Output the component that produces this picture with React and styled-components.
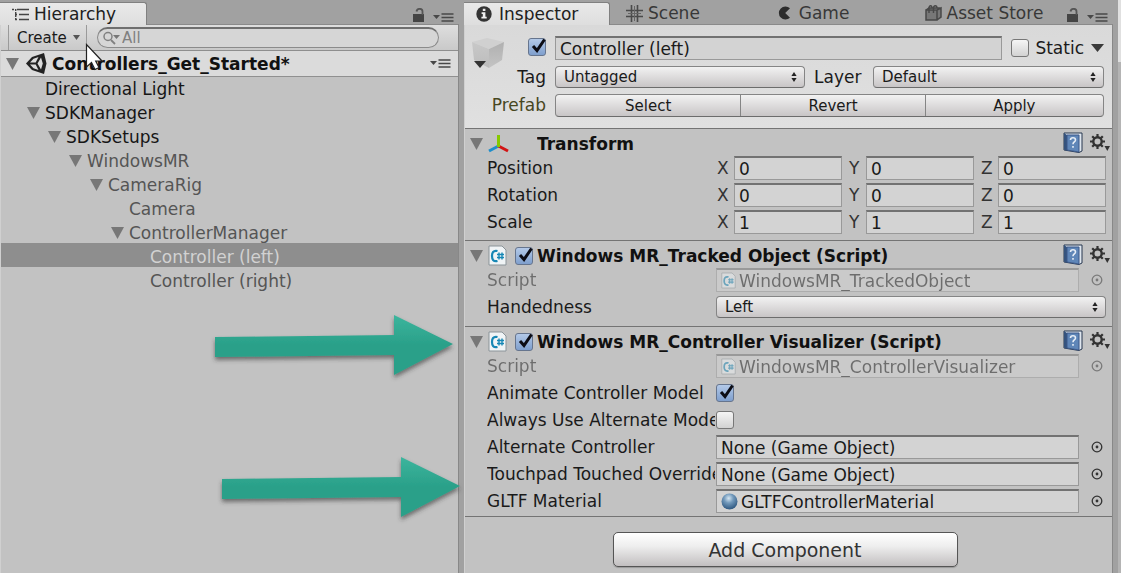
import React from "react";
import styled, { createGlobalStyle, css } from "styled-components";

const GlobalStyle = createGlobalStyle`
  * { box-sizing: border-box; }
  body { margin: 0; background: #a1a1a1; }
  body, input, button, select {
    font-family: "DejaVu Sans", Verdana, sans-serif;
    font-size: 17px;
    color: #1a1a1a;
  }
`;

const Editor = styled.main`
  position: relative;
  display: grid;
  grid-template-columns: minmax(0, 459fr) minmax(0, 649fr) 3px;
  gap: 5px;
  min-height: 100vh;
  background: #a1a1a1;
  overflow: hidden;
`;

const Panel = styled.section`
  position: relative;
  display: flex;
  flex-direction: column;
  min-width: 0;
`;

const TabBar = styled.div`
  display: flex;
  align-items: stretch;
  height: 25px;
  padding-top: 2px;
  border-bottom: 1px solid #8a8a8a;
`;

const Tab = styled.button`
  display: flex;
  align-items: center;
  gap: ${(p) => p.$gap || 5}px;
  width: ${(p) => p.$width}%;
  padding: 0 0 0 ${(p) => p.$inset || 12}px;
  border: 0;
  white-space: nowrap;
  background: transparent;
  color: #383838;
  line-height: 20px;
  ${(p) => p.$active && css`
    height: 23px;
    background: linear-gradient(#e9e9e9, #dedede);
    border-top: 1px solid #808080;
    border-right: 1px solid #808080;
    border-top-right-radius: 3px;
    color: #202020;
  `}
  svg { flex: none; }
`;

const TabActions = styled.div`
  display: flex;
  align-items: flex-end;
  gap: 8px;
  margin-left: auto;
  padding: 0 5px 2px 0;
`;

const Body = styled.div`
  flex: 1;
  background: #c2c2c2;
  border-left: 1px solid #d0d0d0;
  border-right: 1px solid #888;
`;

const Toolbar = styled.div`
  display: flex;
  align-items: center;
  height: 26px;
  padding: 0 19px 0 7px;
  background: linear-gradient(#dedede, #c9c9c9);
  border-bottom: 1px solid #8e8e8e;
`;

const CreateButton = styled.button`
  display: flex;
  align-items: center;
  gap: 6px;
  width: 79px;
  height: 25px;
  padding: 0 0 0 8px;
  border: 0;
  border-left: 1px solid #9a9a9a;
  border-right: 1px solid #9a9a9a;
  background: transparent;
  font-size: 15px;
`;

const Search = styled.label`
  display: flex;
  align-items: center;
  flex: 1;
  min-width: 0;
  height: 21px;
  margin-left: 10px;
  padding-left: 5px;
  border: 1px solid #8b8b8b;
  border-top: 2px solid #6f6f6f;
  border-radius: 11px;
  background: #d6d6d6;
`;

const SearchInput = styled.input`
  flex: 1;
  min-width: 0;
  padding: 0 0 0 1px;
  border: 0;
  outline: 0;
  background: transparent;
  color: #808080;
  font-size: 15px;
  line-height: 18px;
  &::placeholder { color: #808080; opacity: 1; }
`;

const SceneRow = styled.div`
  display: flex;
  align-items: center;
  height: 26px;
  padding: 0 7px 0 5px;
  background: #dbdbdb;
  border-bottom: 1px solid #909090;
  font-weight: 700;
  color: #111;
  svg:last-child { margin-left: auto; }
`;

const SceneIcon = styled.span`
  display: flex;
  width: 33px;
  padding-left: 7px;
  svg:last-child { margin-left: 0; }
`;

const Tree = styled.ul`
  list-style: none;
  margin: -2px 0 0;
  padding: 0;
`;

const TreeRow = styled.li`
  display: flex;
  align-items: center;
  gap: 5px;
  height: 24px;
  padding: 3px 0 0 ${(p) => 5 + p.$depth * 21}px;
  background: ${(p) => (p.$selected ? "#8e8e8e" : "transparent")};
  color: ${(p) => (p.$selected ? "#d2d2d2" : p.$muted ? "#555" : "#161616")};
  white-space: nowrap;
`;

const FoldSpace = styled.span`
  width: 13px;
`;

const ObjectHeader = styled.div`
  display: grid;
  grid-template-columns: 81px minmax(0, 1fr);
  align-content: start;
  column-gap: 9px;
  row-gap: 6px;
  height: 103px;
  padding: 11px 8px 0 0;
  background: linear-gradient(#d9d9d9, #e0e0e0);
`;

const HeaderLead = styled.div`
  display: flex;
  align-items: flex-start;
  justify-content: space-between;
  padding: 2px 0 0 7px;
  height: 24px;
`;

const HeaderLabel = styled.label`
  justify-self: end;
  line-height: 22px;
  color: ${(p) => (p.$prefab ? "#47471f" : "#1a1a1a")};
`;

const HeaderLine = styled.div`
  display: flex;
  align-items: center;
  min-width: 0;
  height: ${(p) => p.$height || 24}px;
`;

const StaticLabel = styled.label`
  display: flex;
  align-items: center;
  gap: 6px;
  margin: 0 7px 0 9px;
`;

const LayerLabel = styled.label`
  width: 68px;
  padding-left: 9px;
`;

const Field = styled.input`
  flex: 1;
  width: 100%;
  min-width: 0;
  height: 24px;
  padding: 0 4px;
  border: 1px solid #999;
  border-top: 2px solid #727272;
  border-radius: 0;
  outline: 0;
  background: #d3d3d3;
`;

const SelectWrap = styled.div`
  position: relative;
  display: flex;
  flex: ${(p) => p.$grow || 1} 1 0;
  min-width: 0;
  svg { position: absolute; right: 8px; top: 6px; pointer-events: none; }
`;

const SelectBox = styled.select`
  appearance: none;
  width: 100%;
  height: 22px;
  padding: 0 20px 0 8px;
  border: 1px solid #858585;
  border-bottom-color: #6c6c6c;
  border-radius: 4px;
  outline: 0;
  background: linear-gradient(#f2f2f2, #c8c5c6);
  font-size: 15px;
`;

const ButtonGroup = styled.div`
  display: grid;
  grid-template-columns: 185fr 185fr 179fr;
  height: 23px;
  border: 1px solid #858585;
  border-bottom-color: #6c6c6c;
  border-radius: 4px;
  background: linear-gradient(#f2f2f2, #c8c5c6);
`;

const GroupButton = styled.button`
  padding: 0;
  border: 0;
  border-left: ${(p) => (p.$first ? 0 : 1)}px solid #858585;
  background: transparent;
  font-size: 15px;
`;

const CheckWrap = styled.span`
  position: relative;
  display: inline-flex;
  flex: none;
  width: 18px;
  height: 18px;
  svg { position: absolute; left: 2px; top: -1px; pointer-events: none; display: none; }
  input:checked + svg { display: block; }
`;

const CheckInput = styled.input`
  appearance: none;
  width: 18px;
  height: 18px;
  margin: 0;
  border: 1px solid #777;
  border-radius: 3px;
  background: linear-gradient(#f5f5f5, #d2d2d2);
  &:checked { background: linear-gradient(#b3c9e8, #7f9fcd); border-color: #66758e; }
`;

const ComponentBox = styled.section`
  padding: 0 6px ${(p) => p.$bottom || 6}px 22px;
  border-top: 1px solid #747474;
`;

const ComponentHead = styled.header`
  display: flex;
  align-items: center;
  height: 27px;
  padding-top: 2px;
  margin: 0 -4px 0 -17px;
`;

const ComponentIcon = styled.span`
  display: flex;
  width: 32px;
  padding-left: 5px;
`;

const Toggle = styled.span`
  display: flex;
  width: 18px;
`;

const ComponentTitle = styled.h2`
  flex: 1;
  min-width: 0;
  margin: 0 0 0 4px;
  overflow: hidden;
  font-size: 17px;
  line-height: 22px;
  white-space: nowrap;
  color: #111;
`;

const HeadTools = styled.span`
  display: flex;
  align-items: center;
  gap: 7px;
  padding-bottom: 2px;
`;

const Rows = styled.div`
  display: grid;
  gap: 3px;
`;

const Row = styled.div`
  display: grid;
  grid-template-columns: 228px minmax(0, 1fr);
  column-gap: 1px;
  align-items: center;
  height: 24px;
  opacity: ${(p) => (p.$disabled ? 0.5 : 1)};
`;

const RowLabel = styled.label`
  overflow: hidden;
  line-height: 24px;
  white-space: nowrap;
`;

const Axes = styled.div`
  display: grid;
  grid-template-columns: repeat(3, minmax(0, 1fr));
  gap: 6px;
`;

const Axis = styled.label`
  display: flex;
  align-items: center;
`;

const AxisName = styled.span`
  width: 18px;
  padding-left: 1px;
  color: #333;
`;

const ObjectSlot = styled.div`
  display: flex;
  align-items: center;
  gap: 12px;
  padding-right: 3px;
`;

const SlotBox = styled.div`
  display: flex;
  align-items: center;
  gap: 3px;
  flex: 1;
  min-width: 0;
  height: 24px;
  padding: 0 4px;
  border: 1px solid #999;
  border-top: 2px solid #727272;
  background: #d3d3d3;
`;

const SlotInput = styled.input`
  flex: 1;
  min-width: 0;
  padding: 0;
  border: 0;
  outline: 0;
  background: transparent;
  line-height: 20px;
`;

const PickButton = styled.button`
  display: flex;
  padding: 0;
  border: 0;
  background: transparent;
`;

const Footer = styled.footer`
  display: flex;
  justify-content: center;
  padding: 15px 13px 5px 6px;
  border-top: 1px solid #747474;
`;

const AddButton = styled.button`
  width: 345px;
  height: 35px;
  padding: 0;
  border: 1px solid #555;
  border-radius: 5px;
  background: linear-gradient(#fff, #eee 40%, #c2bfc0);
  box-shadow: 0 1px 1px #999;
  font-size: 19px;
  color: #333;
`;

const SideStrip = styled.div`
  background: linear-gradient(#e0e0e0 0 62px, #b4b4b4 62px);
`;

const Arrows = styled.svg`
  position: absolute;
  right: -10px;
  top: 300px;
  width: 260px;
  height: 230px;
  z-index: 2;
  pointer-events: none;
`;

const Pointer = styled.svg`
  position: absolute;
  left: 85px;
  top: 43px;
  z-index: 3;
  pointer-events: none;
`;

const Fold = () => (
  <svg width="13" height="12" viewBox="0 0 13 12"><path d="M0 0h13L6.500 12z" fill="#777" /></svg>
);

const Caret = ({ w = 7, h = 5, color = "#555" }) => (
  <svg width={w} height={h} viewBox="0 0 7 5" preserveAspectRatio="none"><path d="M0 0h7L3.500 5z" fill={color} /></svg>
);

const MenuIcon = () => (
  <svg width="21" height="9" viewBox="0 0 21 9">
    <path d="M0 2h7L3.500 6z" fill="#484848" />
    <path d="M8.500 1h12M8.500 4.500h12M8.500 8h12" stroke="#484848" strokeWidth="1.500" />
  </svg>
);

const LockIcon = () => (
  <svg width="12" height="14" viewBox="0 0 12 14">
    <path d="M0 6h11v8H0z" fill="#444" />
    <path d="M3.500 3.500C4 0 9.500 0 9.500 3.500V7" fill="none" stroke="#555" strokeWidth="1.800" />
  </svg>
);

const ListIcon = () => (
  <svg width="17" height="13" viewBox="0 0 17 13">
    <path d="M5 1.500h12M7 6.500h10M7 11.500h10" stroke="#444" strokeWidth="1.600" />
    <path d="M0 1.500h3M3 6.500h2M3 11.500h2M3.700 1v11" stroke="#444" strokeWidth="1.400" strokeDasharray="2 1" />
  </svg>
);

const InfoIcon = () => (
  <svg width="16" height="16" viewBox="0 0 16 16">
    <circle cx="8" cy="8" r="7.700" fill="#333" />
    <path d="M6.800 2.800h2.600v2.200H6.800zM5.600 6.300h3.800v4.400h1.300v1.700H5.400v-1.700h1.400V8H5.600z" fill="#eee" />
  </svg>
);

const GridIcon = () => (
  <svg width="17" height="17" viewBox="0 0 17 17">
    <path d="M0 5.500h17M0 11.500h17M5.500 0v17M11.500 0v17" stroke="#4a4a4a" strokeWidth="1.600" />
    <path d="M2 8.500h13M8.500 1v15" stroke="#666" strokeWidth="1" />
  </svg>
);

const GameIcon = () => (
  <svg width="14" height="14" viewBox="0 0 14 14">
    <path d="M12 2.200A6.600 6.600 0 1 0 12 11.800L7.200 7z" fill="#2d2d2d" />
  </svg>
);

const StoreIcon = () => (
  <svg width="17" height="16" viewBox="0 0 17 16">
    <path d="M1 5h11v10H1zM12 5l4-2v9l-4 3M1 5l3-2h12" fill="#777" stroke="#484848" strokeWidth="1.500" />
    <path d="M4 8V3C4 0 7 0 7 3M8.500 8V3C8.500 0 12 0 12 3" fill="none" stroke="#484848" strokeWidth="1.400" />
  </svg>
);

const SearchIcon = () => (
  <svg width="18" height="14" viewBox="0 0 18 14">
    <circle cx="5" cy="5.500" r="4" fill="none" stroke="#808080" strokeWidth="1.500" />
    <path d="M8 9l4 4" stroke="#808080" strokeWidth="1.800" />
    <path d="M10 4h7l-3.500 4z" fill="#777" />
  </svg>
);

const UnityIcon = () => (
  <svg width="21" height="21" viewBox="0 0 21 21">
    <path d="M0 10.500L6 4l12-4 2.500 10.500L18 21 6 17z" fill="#222" />
    <path d="M4 9.500l3.500-3.700 5-1.800-2.800 5.500zM4 11.600l3.500 3.700 5 1.800-2.800-5.500zM11.500 10.500l3.500-6.100 1.800 6.100-1.800 6.100z" fill="#dbdbdb" />
  </svg>
);

const CubeIcon = () => (
  <svg width="32" height="31" viewBox="0 0 32 31">
    <defs>
      <linearGradient id="cubeL" x1="0" y1="0" x2="0" y2="1"><stop offset="0" stopColor="#c8c8c8" /><stop offset="1" stopColor="#bcbcbc" /></linearGradient>
      <linearGradient id="cubeR" x1="0" y1="0" x2="0" y2="1"><stop offset="0" stopColor="#b0b0b0" /><stop offset="1" stopColor="#c4c4c4" /></linearGradient>
    </defs>
    <path d="M0 4L15 0l17 4-15 7z" fill="#d0d0d0" />
    <path d="M0 4l17 7v19L2 22z" fill="url(#cubeL)" />
    <path d="M32 4l-15 7v19l13-8z" fill="url(#cubeR)" />
    <path d="M2 23h12l-6 7z" fill="#333" />
  </svg>
);

const CheckMark = () => (
  <svg width="17" height="17" viewBox="0 0 17 17">
    <path d="M3 9l4 4.500L14.500 2.500" fill="none" stroke="#0c0c14" strokeWidth="3" />
  </svg>
);

const UpDown = () => (
  <svg width="6" height="10" viewBox="0 0 6 10"><path d="M3 0l2.600 4H.4zM3 10l2.600-4H.4z" fill="#222" /></svg>
);

const AxesIcon = () => (
  <svg width="21" height="18" viewBox="0 0 21 18">
    <path d="M10.500 11L1 16" stroke="#1f8ecb" strokeWidth="3" />
    <path d="M10.500 11l9.500 5" stroke="#d21414" strokeWidth="3" />
    <path d="M10.500 0v12" stroke="#86c900" strokeWidth="3" />
  </svg>
);

const ScriptIcon = ({ size = 20 }) => (
  <svg width={size - 1} height={size + 1} viewBox="0 0 19 21">
    <path d="M1 1h13l4 4v15H1z" fill="#f0f4f6" stroke="#8b9499" />
    <path d="M9.500 6C5 5 4 8 4 11c0 3.500 1.500 6 5.500 5" fill="none" stroke="#1687b5" strokeWidth="2.200" />
    <path d="M11 7.500v7M14 7.500v7M9 9.500h7M9 12.500h7" stroke="#1687b5" strokeWidth="1.400" />
  </svg>
);

const BookIcon = () => (
  <svg width="20" height="21" viewBox="0 0 20 21">
    <path d="M1 1h18v18l-3 1.500L1 18z" fill="#dfe6ee" stroke="#26364f" />
    <path d="M1 1l3 2v16l-3-1.500z" fill="#35537d" />
    <path d="M4 3h12v17L4 18z" fill="#5f86b8" stroke="#3c598a" />
    <path d="M7.500 8C7.500 5 12.500 5 12.500 8c0 2-2.500 2-2.500 4.200M10 14v1.800" fill="none" stroke="#e8eef6" strokeWidth="1.600" />
  </svg>
);

const GearIcon = () => (
  <svg width="20" height="18" viewBox="0 0 20 18">
    <circle cx="7.500" cy="7.500" r="4.200" fill="none" stroke="#333" strokeWidth="2.400" />
    <path d="M7.500 0v3M7.500 12v3M0 7.500h3M12 7.500h3M2.200 2.200l2.200 2.200M10.600 10.600l2.200 2.200M2.200 12.800l2.200-2.200M10.600 4.400l2.200-2.200" stroke="#333" strokeWidth="2.200" />
    <path d="M14.500 12H20l-2.700 5z" fill="#333" />
  </svg>
);

const PickIcon = () => (
  <svg width="12" height="12" viewBox="0 0 12 12">
    <circle cx="6" cy="6" r="4.800" fill="none" stroke="#333" strokeWidth="1.300" />
    <circle cx="6" cy="6" r="1.400" fill="#333" />
  </svg>
);

const MaterialIcon = () => (
  <svg width="17" height="17" viewBox="0 0 17 17">
    <defs>
      <radialGradient id="sphere" cx="45%" cy="30%" r="65%">
        <stop offset="0" stopColor="#d5e6f2" /><stop offset="0.450" stopColor="#7299bb" /><stop offset="1" stopColor="#365f87" />
      </radialGradient>
    </defs>
    <circle cx="8.500" cy="8.500" r="8" fill="url(#sphere)" />
  </svg>
);

const CHECK_LABELS = { active: "Active", enabled: "Enabled" };

function Check({ id, checked, name }) {
  return (
    <CheckWrap>
      <CheckInput type="checkbox" id={id} defaultChecked={checked} aria-label={CHECK_LABELS[name]} />
      <CheckMark />
    </CheckWrap>
  );
}

function Dropdown({ id, value, grow }) {
  return (
    <SelectWrap $grow={grow}>
      <SelectBox id={id} defaultValue={value}><option>{value}</option></SelectBox>
      <UpDown />
    </SelectWrap>
  );
}

function Vector({ label, values }) {
  return (
    <Row>
      <RowLabel as="span">{label}</RowLabel>
      <Axes>
        {["X", "Y", "Z"].map((axis, i) => (
          <Axis key={axis}><AxisName>{axis}</AxisName><Field defaultValue={values[i]} /></Axis>
        ))}
      </Axes>
    </Row>
  );
}

function Slot({ id, label, value, icon, disabled }) {
  return (
    <Row $disabled={disabled}>
      <RowLabel htmlFor={id}>{label}</RowLabel>
      <ObjectSlot>
        <SlotBox>{icon}<SlotInput id={id} readOnly value={value} /></SlotBox>
        <PickButton aria-label={`Pick ${label}`}><PickIcon /></PickButton>
      </ObjectSlot>
    </Row>
  );
}

function Component({ title, icon, toggle, bottom, children }) {
  return (
    <ComponentBox $bottom={bottom}>
      <ComponentHead>
        <Fold />
        <ComponentIcon>{icon}</ComponentIcon>
        <Toggle>{toggle && <Check checked name="enabled" />}</Toggle>
        <ComponentTitle>{title}</ComponentTitle>
        <HeadTools><BookIcon /><GearIcon /></HeadTools>
      </ComponentHead>
      <Rows>{children}</Rows>
    </ComponentBox>
  );
}

const NODES = [
  { name: "Directional Light", depth: 1, leaf: true },
  { name: "SDKManager", depth: 1 },
  { name: "SDKSetups", depth: 2 },
  { name: "WindowsMR", depth: 3, muted: true },
  { name: "CameraRig", depth: 4, muted: true },
  { name: "Camera", depth: 5, leaf: true, muted: true },
  { name: "ControllerManager", depth: 5, muted: true },
  { name: "Controller (left)", depth: 6, leaf: true, selected: true },
  { name: "Controller (right)", depth: 6, leaf: true, muted: true },
];

const ARROW = "M6 37L185 35V15L244 44L185 75V55L6 57z";

function Hierarchy() {
  return (
    <Panel>
      <TabBar>
        <Tab $active $width={32}><ListIcon />Hierarchy</Tab>
        <TabActions><LockIcon /><MenuIcon /></TabActions>
      </TabBar>
      <Body>
        <Toolbar>
          <CreateButton>Create <Caret /></CreateButton>
          <Search><SearchIcon /><SearchInput placeholder="All" aria-label="Search" /></Search>
        </Toolbar>
        <SceneRow><Fold /><SceneIcon><UnityIcon /></SceneIcon>Controllers_Get_Started*<MenuIcon /></SceneRow>
        <Tree>
          {NODES.map((n) => (
            <TreeRow key={n.name} $depth={n.depth} $muted={n.muted} $selected={n.selected}>
              {n.leaf ? <FoldSpace /> : <Fold />}{n.name}
            </TreeRow>
          ))}
        </Tree>
      </Body>
      <Arrows viewBox="0 0 260 230">
        <defs>
          <filter id="shade" x="-10%" y="-20%" width="120%" height="150%">
            <feDropShadow dx="0" dy="3" stdDeviation="2" floodColor="#333" floodOpacity="0.600" />
          </filter>
          <linearGradient id="teal" x1="0" y1="0" x2="0" y2="1">
            <stop offset="0" stopColor="#3cb59d" /><stop offset="0.500" stopColor="#2aa089" />
          </linearGradient>
        </defs>
        <path d={ARROW} fill="url(#teal)" filter="url(#shade)" />
        <path d={ARROW} transform="translate(7 142)" fill="url(#teal)" filter="url(#shade)" />
      </Arrows>
      <Pointer width="20" height="28" viewBox="0 0 20 28">
        <path d="M1.500 1.500V24l5-4.500 3.500 7 4-2-3.300-6.500H17z" fill="#fff" stroke="#222" strokeWidth="1.200" />
      </Pointer>
    </Panel>
  );
}

function Inspector() {
  return (
    <Panel>
      <TabBar>
        <Tab $active $width={22.500} $gap={7}><InfoIcon />Inspector</Tab>
        <Tab $width={24} $inset={16}><GridIcon />Scene</Tab>
        <Tab $width={22} $inset={12} $gap={7}><GameIcon />Game</Tab>
        <Tab $inset={16}><StoreIcon />Asset Store</Tab>
        <TabActions><LockIcon /><MenuIcon /></TabActions>
      </TabBar>
      <Body>
        <ObjectHeader>
          <HeaderLead><CubeIcon /><Check checked name="active" /></HeaderLead>
          <HeaderLine>
            <Field defaultValue="Controller (left)" aria-label="Name" />
            <StaticLabel htmlFor="static"><Check id="static" />Static</StaticLabel>
            <Caret w={13} h={8} color="#3a3a3a" />
          </HeaderLine>
          <HeaderLabel htmlFor="tag">Tag</HeaderLabel>
          <HeaderLine $height={22}>
            <Dropdown id="tag" value="Untagged" grow={250} />
            <LayerLabel htmlFor="layer">Layer</LayerLabel>
            <Dropdown id="layer" value="Default" grow={231} />
          </HeaderLine>
          <HeaderLabel as="span" $prefab>Prefab</HeaderLabel>
          <ButtonGroup>
            <GroupButton $first>Select</GroupButton>
            <GroupButton>Revert</GroupButton>
            <GroupButton>Apply</GroupButton>
          </ButtonGroup>
        </ObjectHeader>
        <Component title="Transform" icon={<AxesIcon />}>
          <Vector label="Position" values={[0, 0, 0]} />
          <Vector label="Rotation" values={[0, 0, 0]} />
          <Vector label="Scale" values={[1, 1, 1]} />
        </Component>
        <Component title="Windows MR_Tracked Object (Script)" icon={<ScriptIcon />} toggle bottom={7}>
          <Slot id="s1" label="Script" value="WindowsMR_TrackedObject" icon={<ScriptIcon size={16} />} disabled />
          <Row>
            <RowLabel htmlFor="hand">Handedness</RowLabel>
            <Dropdown id="hand" value="Left" />
          </Row>
        </Component>
        <Component title="Windows MR_Controller Visualizer (Script)" icon={<ScriptIcon />} toggle bottom={3}>
          <Slot id="s2" label="Script" value="WindowsMR_ControllerVisualizer" icon={<ScriptIcon size={16} />} disabled />
          <Row><RowLabel htmlFor="anim">Animate Controller Model</RowLabel><Check id="anim" checked /></Row>
          <Row><RowLabel htmlFor="alt">Always Use Alternate Model</RowLabel><Check id="alt" /></Row>
          <Slot id="ac" label="Alternate Controller" value="None (Game Object)" />
          <Slot id="to" label="Touchpad Touched Override" value="None (Game Object)" />
          <Slot id="gm" label="GLTF Material" value="GLTFControllerMaterial" icon={<MaterialIcon />} />
        </Component>
        <Footer><AddButton>Add Component</AddButton></Footer>
      </Body>
    </Panel>
  );
}

export default function App() {
  return (
    <>
      <GlobalStyle />
      <Editor>
        <Hierarchy />
        <Inspector />
        <SideStrip />
      </Editor>
    </>
  );
}
